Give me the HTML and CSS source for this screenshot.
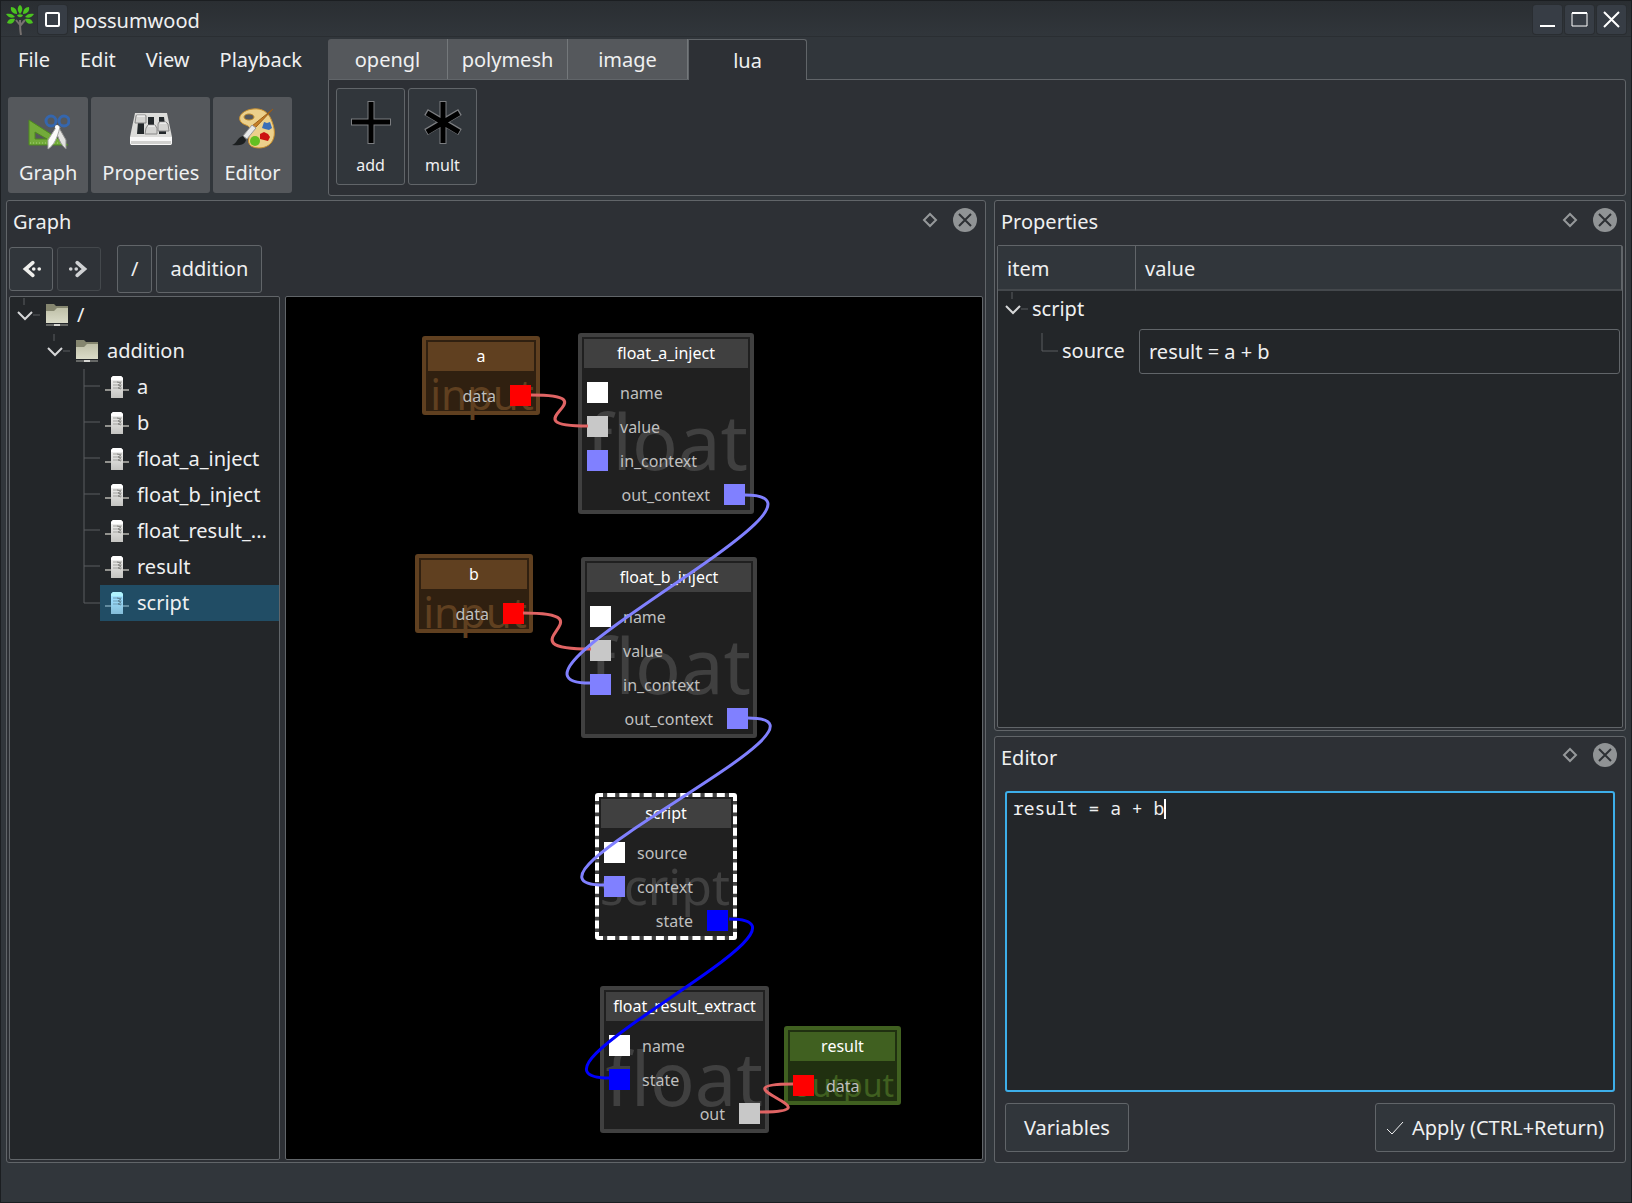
FILE: index.html
```html
<!DOCTYPE html>
<html lang="en">
<head>
<meta charset="utf-8">
<title>possumwood</title>
<link rel="stylesheet" href="styles.css">
</head>
<body>
<svg class="defs" aria-hidden="true">
  <defs>
    <linearGradient id="paper" x1="0" y1="0" x2="0" y2="1"><stop offset="0" stop-color="#bfc0a8"/><stop offset="1" stop-color="#dadbc8"/></linearGradient>
    <linearGradient id="metal" x1="0" y1="0" x2="0" y2="1"><stop offset="0" stop-color="#f6f6f5"/><stop offset="1" stop-color="#c4c4c1"/></linearGradient>
    <symbol id="i-folder" viewBox="0 0 24 24">
      <path d="M1 1h8l2 2h12v8H1z" fill="#85866f"/>
      <path d="M1 8h8l3-3h11v15H1z" fill="url(#paper)"/>
      <path d="M1 22h22" stroke="#a9a9a4" stroke-width="1"/>
      <path d="M9 22h6" stroke="#d6d6d2" stroke-width="2"/>
    </symbol>
    <symbol id="i-node" viewBox="0 0 24 24">
      <path d="M0 15h24" stroke="#92928e" stroke-width="2"/>
      <path d="M6 3l2-2h8l2 2v20H6z" fill="url(#metal)"/>
      <path d="M6 3l2-2h8l2 2v2H6z" fill="#fff"/>
      <path d="M8 7h9M8 10h9M8 13h9" stroke="#a3a3a0" stroke-width="1"/>
      <path d="M12 7l4 1-3 2 3 1-3 2 3 1" stroke="#878784" fill="none"/>
    </symbol>
    <symbol id="i-open" viewBox="0 0 30 36">
      <path d="M14 1v7M23 18h7" stroke="#5a5d60" stroke-width="1" fill="none"/>
      <path d="M8 15l7 7 7-7" stroke="#d6d7d8" stroke-width="2" fill="none"/>
    </symbol>
    <symbol id="i-tee" viewBox="0 0 30 36"><path d="M14 0v36M14 17h16" stroke="#5a5d60" stroke-width="1" fill="none"/></symbol>
    <symbol id="i-ell" viewBox="0 0 30 36"><path d="M14 0v18h16" stroke="#5a5d60" stroke-width="1" fill="none"/></symbol>
    <symbol id="i-float" viewBox="0 0 16 16"><path d="M8 2l6 6-6 6-6-6z" stroke="#95989a" stroke-width="2" fill="none"/></symbol>
    <symbol id="i-close" viewBox="0 0 24 24"><circle cx="12" cy="12" r="12" fill="#909395"/><path d="M6 6l12 12M18 6L6 18" stroke="#2d3034" stroke-width="2"/></symbol>
  </defs>
</svg>

<header class="titlebar">
  <svg class="logo" viewBox="0 0 28 30">
    <path d="M15 30c-1-5-1-8-1-15M14 20l-4-5M14 21l5-6" stroke="#77716f" stroke-width="2" fill="none"/>
    <g fill="#4bc320">
      <path d="M14 0c3 2 3 6 0 9-3-3-3-7 0-9z"/><path d="M5 2c4 0 6 3 6 7-4 0-7-3-6-7z"/><path d="M23 2c-4 0-6 3-6 7 4 0 7-3 6-7z"/>
      <path d="M0 9c4-1 7 0 9 3-4 2-7 0-9-3z"/><path d="M28 9c-4-1-7 0-9 3 4 2 7 0 9-3z"/>
      <path d="M1 18c1-4 4-5 8-4-1 4-4 6-8 4z"/><path d="M27 18c-1-4-4-5-8-4 1 4 4 6 8 4z"/><path d="M11 10c2-1 4-1 6 0-1 3-5 3-6 0z"/>
    </g>
  </svg>
  <button class="win-btn" aria-label="Window menu"><svg viewBox="0 0 29 29"><rect x="8" y="8" width="13" height="13" rx="1" fill="none" stroke="#fff" stroke-width="2"/></svg></button>
  <h1 class="win-title">possumwood</h1>
  <div class="win-controls">
    <button class="win-btn" aria-label="Minimize"><svg viewBox="0 0 29 29"><path d="M7 21h15" stroke="#fff" stroke-width="2"/></svg></button>
    <button class="win-btn" aria-label="Maximize"><svg viewBox="0 0 29 29"><path d="M7 8h15v13H7z" fill="none" stroke="#fff" stroke-width="1"/><path d="M7 8h15" stroke="#fff" stroke-width="2"/></svg></button>
    <button class="win-btn" aria-label="Close"><svg viewBox="0 0 29 29"><path d="M7 7l15 15M22 7L7 22" stroke="#fff" stroke-width="2"/></svg></button>
  </div>
</header>

<section class="top">
  <div class="top-left">
    <nav class="menu">
      <button>File</button><button>Edit</button><button>View</button><button>Playback</button>
    </nav>
    <div class="toolbar">
      <button class="tool">
        <svg viewBox="0 0 44 44">
          <path d="M3 12l39 25H3z" fill="#73ab3a" stroke="#4f8a1e"/><path d="M9 24l12 7H9z" fill="#56585c" stroke="#4f8a1e"/>
          <path d="M4 35h34" stroke="#a6d27a" stroke-dasharray="1 2"/>
          <path d="M29 19l3-1 8 14 0 9c-5-4-8-10-11-22z" fill="#e2e2e0" stroke="#8f8f8d" stroke-width="1"/>
          <path d="M34 19l-3-1-9 14 0 9c6-4 9-10 12-22z" fill="#fbfbfa" stroke="#a5a5a3" stroke-width="1"/>
          <ellipse cx="25" cy="13" rx="5" ry="5" fill="none" stroke="#3566ad" stroke-width="3"/><ellipse cx="38" cy="13" rx="5" ry="5" fill="none" stroke="#3566ad" stroke-width="3"/>
          <circle cx="31" cy="19" r="2" fill="#fff"/>
        </svg>Graph</button>
      <button class="tool">
        <svg viewBox="0 0 44 44">
          <path d="M6 5h32l5 24v5q0 3-2 3H3q-2 0-2-3v-5z" fill="#dcdcda"/><path d="M1 29h42v5q0 3-2 3H3q-2 0-2-3z" fill="#f8f8f8"/>
          <path d="M2 33h40v3H2z" fill="#d0d0ce"/>
          <path d="M9 14h6v12H8zM19 9h6v12h-6zM30 9h5l1 8h-6zM30 23h7v3h-7z" fill="#22272a"/>
          <path d="M7 8q0-1 1-1h8q1 0 1 1v7H6zM17 20l2-3h7l2 3v6H16zM29 16l1-2h7l2 2 1 7H29z" fill="#d4d4d2" stroke="#888" stroke-width="1"/>
          <path d="M8 8h8M19 18h7M31 15h6" stroke="#fff"/>
        </svg>Properties</button>
      <button class="tool">
        <svg viewBox="0 0 44 44">
          <path d="M22 1c9-1 15 3 18 10 4 9 5 18 0 24-5 6-15 6-20 3-5-4-1-10-1-16 0-5-4-4-8-7C5 10 11 2 22 1z" fill="#ecd08b" stroke="#c98f2c" stroke-width="1"/>
          <ellipse cx="18" cy="9" rx="5" ry="3" fill="#56585c" stroke="#b8862c" stroke-width="1"/>
          <path d="M33 14l3 1 3-1 1 3 1 3-3 2-4-1-3-1 1-3z" fill="#3b6fb8"/>
          <path d="M29 26l4-2 4 2 2 3-2 4-4-1-4-1z" fill="#cc1111"/>
          <circle cx="24" cy="33" r="5" fill="#63bf22"/>
          <path d="M42 1L24 20l-3-2z" fill="#c77f28" stroke="#9a5c16" stroke-width="1"/><path d="M25 20l-4-3-9 11 4 3z" fill="#e8e8e8" stroke="#999" stroke-width="1"/>
          <path d="M12 28l3 4c-1 5-8 6-14 5 5-1 5-8 11-9z" fill="#1c1f20"/>
        </svg>Editor</button>
    </div>
  </div>
  <div class="top-right">
    <div class="tabs" role="tablist">
      <button class="tab" role="tab">opengl</button><button class="tab" role="tab">polymesh</button><button class="tab" role="tab">image</button><button class="tab active" role="tab" aria-selected="true">lua</button>
    </div>
    <div class="shelf">
      <button class="op"><svg viewBox="0 0 48 48"><path d="M24 3v43M4 24h40" stroke="#7b7d80" stroke-width="7"/><path d="M24 4v41M5 24h38" stroke="#000" stroke-width="5"/></svg>add</button>
      <button class="op"><svg viewBox="0 0 48 48"><path d="M24 3v43M7 14l34 20M41 14L7 34" stroke="#7b7d80" stroke-width="7"/><path d="M24 4v41M8 15l32 19M40 15L8 34" stroke="#000" stroke-width="5"/></svg>mult</button>
    </div>
  </div>
</section>

<main class="docks">
  <section class="dock">
    <header class="dock-head"><h2>Graph</h2><button aria-label="Float"><svg class="ic-float"><use href="#i-float"/></svg></button><button aria-label="Close"><svg class="ic-close"><use href="#i-close"/></svg></button></header>
    <nav class="crumbs">
      <button class="arrow" aria-label="Back"><svg viewBox="0 0 24 24"><path d="M14 5l-8 7 8 7" stroke="#efefec" stroke-width="4" fill="none" stroke-linecap="round"/><circle cx="15" cy="12" r="2" fill="#efefec"/><circle cx="21" cy="12" r="2" fill="#efefec"/></svg></button>
      <button class="arrow off" aria-label="Forward"><svg viewBox="0 0 24 24"><path d="M10 5l8 7-8 7" stroke="#d0d2d4" stroke-width="4" fill="none" stroke-linecap="round"/><circle cx="9" cy="12" r="2" fill="#d0d2d4"/><circle cx="3" cy="12" r="2" fill="#d0d2d4"/></svg></button>
      <span class="gap"></span>
      <button class="crumb">/</button><button class="crumb">addition</button>
    </nav>
    <div class="graph-body">
      <ul class="tree">
        <li class="lvl0"><svg class="guide"><use href="#i-open"/></svg><span class="item"><svg><use href="#i-folder"/></svg>/</span></li>
        <li class="lvl1"><svg class="guide"><use href="#i-open"/></svg><span class="item"><svg><use href="#i-folder"/></svg>addition</span></li>
        <li class="lvl2"><svg class="guide"><use href="#i-tee"/></svg><span class="item"><svg><use href="#i-node"/></svg>a</span></li>
        <li class="lvl2"><svg class="guide"><use href="#i-tee"/></svg><span class="item"><svg><use href="#i-node"/></svg>b</span></li>
        <li class="lvl2"><svg class="guide"><use href="#i-tee"/></svg><span class="item"><svg><use href="#i-node"/></svg>float_a_inject</span></li>
        <li class="lvl2"><svg class="guide"><use href="#i-tee"/></svg><span class="item"><svg><use href="#i-node"/></svg>float_b_inject</span></li>
        <li class="lvl2"><svg class="guide"><use href="#i-tee"/></svg><span class="item"><svg><use href="#i-node"/></svg>float_result_...</span></li>
        <li class="lvl2"><svg class="guide"><use href="#i-tee"/></svg><span class="item"><svg><use href="#i-node"/></svg>result</span></li>
        <li class="lvl2"><svg class="guide"><use href="#i-ell"/></svg><span class="item selected"><svg><use href="#i-node"/></svg>script</span></li>
      </ul>
      <div class="canvas">
        <article class="node input n-a"><span class="ghost g-input">input</span><h3>a</h3><ul><li class="out"><i class="red"></i>data</li></ul></article>
        <article class="node n-float-a"><span class="ghost g-float">float</span><h3>float_a_inject</h3><ul><li><i class="white"></i>name</li><li><i class="grey"></i>value</li><li><i class="violet"></i>in_context</li><li class="out"><i class="violet"></i>out_context</li></ul></article>
        <article class="node input n-b"><span class="ghost g-input">input</span><h3>b</h3><ul><li class="out"><i class="red"></i>data</li></ul></article>
        <article class="node n-float-b"><span class="ghost g-float">float</span><h3>float_b_inject</h3><ul><li><i class="white"></i>name</li><li><i class="grey"></i>value</li><li><i class="violet"></i>in_context</li><li class="out"><i class="violet"></i>out_context</li></ul></article>
        <article class="node picked n-script"><span class="ghost g-script">script</span><h3>script</h3><ul><li><i class="white"></i>source</li><li><i class="violet"></i>context</li><li class="out"><i class="blue"></i>state</li></ul></article>
        <article class="node n-extract"><span class="ghost g-extract">float</span><h3>float_result_extract</h3><ul><li><i class="white"></i>name</li><li><i class="blue"></i>state</li><li class="out"><i class="grey"></i>out</li></ul></article>
        <article class="node output n-result"><span class="ghost g-output">output</span><h3>result</h3><ul><li><i class="red"></i>data</li></ul></article>
        <svg class="wires">
          <path class="w-red" d="M245 98c84 0-26 31 57 31"/>
          <path class="w-red" d="M237 316c92 0-26 36 68 36"/>
          <path class="w-violet" d="M459 198c120 0-275 188-155 188"/>
          <path class="w-violet" d="M462 421c115 0-259 167-144 167"/>
          <path class="w-blue" d="M443 622c115 0-234 159-119 159"/>
          <path class="w-red" d="M474 815c82 0-49-28 33-28"/>
        </svg>
      </div>
    </div>
  </section>

  <div class="side">
    <section class="dock props">
      <header class="dock-head"><h2>Properties</h2><button aria-label="Float"><svg class="ic-float"><use href="#i-float"/></svg></button><button aria-label="Close"><svg class="ic-close"><use href="#i-close"/></svg></button></header>
      <div class="sheet">
        <table>
          <thead><tr><th class="c-item">item</th><th>value</th></tr></thead>
          <tbody>
            <tr><td><span class="cell"><svg class="guide"><use href="#i-open"/></svg>script</span></td><td></td></tr>
            <tr><td><span class="cell sub"><svg class="guide"><use href="#i-ell"/></svg><label for="source">source</label></span></td><td class="c-edit"><input id="source" type="text" value="result = a + b"></td></tr>
          </tbody>
        </table>
      </div>
    </section>
    <section class="dock editor">
      <header class="dock-head"><h2>Editor</h2><button aria-label="Float"><svg class="ic-float"><use href="#i-float"/></svg></button><button aria-label="Close"><svg class="ic-close"><use href="#i-close"/></svg></button></header>
      <div class="editor-body">
        <div class="code"><textarea aria-label="Script source" spellcheck="false">result = a + b</textarea><span class="caret"></span></div>
        <div class="actions">
          <button class="push">Variables</button>
          <button class="push"><svg viewBox="0 0 18 18"><path d="M1 10l5 5L17 3" fill="none" stroke="#eff0f1" stroke-width="1"/></svg>Apply (CTRL+Return)</button>
        </div>
      </div>
    </section>
  </div>
</main>
</body>
</html>
```
FILE: styles.css
```css
:root {
  --win: #31363b;
  --panel: #2d3035;
  --base: #232629;
  --line: #616569;
  --text: #eff0f1;
}
* { box-sizing: border-box; }
body {
  margin: 0;
  height: 100vh;
  display: flex;
  flex-direction: column;
  background: var(--win);
  border: 1px solid #1b1e21;
  padding: 0 5px 39px 5px;
  color: var(--text);
  font: 20px/28px "Noto Sans", sans-serif;
  overflow: hidden;
}
button, input, textarea { font: inherit; color: inherit; }
button { background: none; border: 0; padding: 0; margin: 0; }
h1, h2, h3, ul { margin: 0; padding: 0; font: inherit; list-style: none; }
svg { display: block; flex: none; }
.defs { position: absolute; width: 0; height: 0; }

/* title bar */
.titlebar {
  display: flex;
  align-items: center;
  height: 36px;
  margin: 0 -5px 2px -5px;
  padding: 2px 5px 0 5px;
  border-bottom: 1px solid #2a2e32;
  background: linear-gradient(#2a2e32, #31363b);
}
.logo { width: 28px; height: 30px; margin-right: 4px; }
.win-btn {
  width: 29px;
  height: 29px;
  border-radius: 3px;
  background: #373d45;
  box-shadow: 0 0 0 1px #292d31;
}
.win-title { flex: 1; margin-left: 6px; padding-top: 2px; }
.win-controls { display: flex; gap: 3px; }

/* menu, toolbar and shelf */
.top { display: flex; height: 157px; margin-bottom: 4px; }
.top-left { width: 322px; }
.menu { display: flex; gap: 30px; padding: 7px 0 0 12px; height: 58px; }
.menu button { height: 28px; }
.toolbar { display: flex; gap: 3px; padding-left: 2px; }
.tool {
  display: flex;
  flex-direction: column;
  align-items: center;
  height: 96px;
  padding: 11px 11px 0;
  border-radius: 3px;
  background: #55585c;
}
.tool svg { width: 44px; height: 44px; margin-bottom: 7px; }
.top-right { flex: 1; display: flex; flex-direction: column; min-width: 0; }
.tabs { display: flex; height: 41px; }
.tab {
  width: 120px;
  height: 40px;
  padding-top: 2px;
  background: #55585c;
  border-right: 1px solid #74787b;
}
.tab:first-child { border-top-left-radius: 3px; }
.tab.active {
  width: 119px;
  height: 41px;
  position: relative;
  background: var(--panel);
  border: 1px solid var(--line);
  border-bottom: 0;
  border-top-right-radius: 3px;
}
.shelf {
  flex: 1;
  display: flex;
  gap: 3px;
  margin-top: -1px;
  padding: 8px 7px;
  background: var(--panel);
  border: 1px solid var(--line);
  border-radius: 0 3px 3px 3px;
}
.op {
  display: flex;
  flex-direction: column;
  align-items: center;
  width: 69px;
  height: 97px;
  padding-top: 9px;
  font-size: 16px;
  line-height: 24px;
  border: 1px solid var(--line);
  border-radius: 3px;
  background: var(--win);
}
.op svg { width: 48px; height: 48px; margin-bottom: 7px; }

/* docks */
.docks {
  flex: 1;
  min-height: 0;
  display: grid;
  grid-template-columns: 980fr 632fr;
  gap: 8px;
}
.dock {
  display: flex;
  flex-direction: column;
  min-width: 0;
  min-height: 0;
  padding: 0 2px 2px;
  background: var(--panel);
  border: 1px solid var(--line);
  border-radius: 3px;
}
.dock-head {
  display: flex;
  align-items: center;
  height: 44px;
  padding: 0 6px 7px 4px;
  gap: 15px;
}
.dock-head h2 { flex: 1; padding-top: 5px; }
.ic-float { width: 16px; height: 16px; }
.ic-close { width: 24px; height: 24px; }
.side { display: flex; flex-direction: column; gap: 5px; min-width: 0; min-height: 0; }
.props { flex: 531 1 0; }
.editor { flex: 427 1 0; }

/* graph dock */
.crumbs { display: flex; align-items: center; gap: 4px; height: 48px; margin-bottom: 3px; }
.crumbs button {
  border: 1px solid var(--line);
  border-radius: 3px;
  background: var(--win);
}
.crumbs .arrow { width: 44px; height: 44px; padding: 0 10px; }
.crumbs .arrow.off { border-color: #44484c; background: #2f3338; }
.crumbs .crumb { height: 48px; padding: 0 13px; }
.gap { width: 8px; }
.graph-body { flex: 1; min-height: 0; display: flex; gap: 5px; }
.tree {
  width: 271px;
  background: var(--base);
  border: 1px solid var(--line);
  border-radius: 2px;
  overflow: hidden;
}
.tree li { display: flex; height: 36px; }
.tree .lvl1 { padding-left: 30px; }
.tree .lvl2 { padding-left: 60px; }
.guide { width: 30px; height: 36px; }
.item { flex: 1; display: flex; align-items: center; gap: 8px; padding-left: 5px; white-space: nowrap; }
.item svg { width: 24px; height: 24px; }
.item.selected { background: #214d65; }
.item.selected svg { filter: brightness(75%) sepia(1) hue-rotate(155deg) saturate(130%); }

.canvas {
  flex: 1;
  position: relative;
  background: #000;
  border: 1px solid var(--line);
  border-radius: 2px;
  overflow: hidden;
}
.node {
  --frame: #404040;
  --fill: #202020;
  position: absolute;
  padding: 2px;
  border: 4px solid var(--frame);
  border-radius: 3px;
  background: var(--fill);
  font-size: 16px;
  line-height: 22px;
  color: #bfbfbf;
}
.node.input { --frame: #604020; --fill: #302010; width: 118px; }
.node.output { --frame: #406020; --fill: #203010; width: 117px; }
.node.picked {
  border: 4px dashed #fff;
  background: linear-gradient(#202020, #202020) padding-box, linear-gradient(#404040, #404040) border-box;
}
.node h3 {
  position: relative;
  height: 29px;
  line-height: 29px;
  text-align: center;
  color: #fff;
  background: var(--frame);
}
.node ul { position: relative; display: flex; flex-direction: column; gap: 13px; padding: 14px 3px 3px; }
.node li { display: flex; gap: 12px; height: 21px; }
.node li.out { flex-direction: row-reverse; gap: 14px; }
.node i { width: 21px; height: 21px; }
.red { background: #f00; }
.white { background: #fff; }
.grey { background: #c8c8c8; }
.violet { background: #8080ff; }
.blue { background: #00f; }
.ghost { position: absolute; right: 2px; bottom: 0; color: var(--frame); white-space: nowrap; }
.g-float { font-size: 76px; line-height: 100px; bottom: 19px; }
.g-extract { font-size: 74px; line-height: 100px; bottom: 1px; }
.g-script { font-size: 50px; line-height: 64px; right: 3px; bottom: 18px; }
.g-input { font-size: 42px; line-height: 54px; bottom: -10px; }
.g-output { font-size: 32px; line-height: 44px; right: 3px; bottom: -6px; }
.n-a { left: 136px; top: 39px; }
.n-float-a { left: 292px; top: 36px; width: 176px; }
.n-b { left: 129px; top: 257px; }
.n-float-b { left: 295px; top: 260px; width: 176px; }
.n-script { left: 309px; top: 496px; width: 142px; }
.n-extract { left: 314px; top: 689px; width: 169px; }
.n-result { left: 498px; top: 729px; }
.wires { position: absolute; inset: 0; width: 100%; height: 100%; fill: none; stroke-width: 3px; }
.w-red { stroke: #e06464; }
.w-violet { stroke: #8080ff; }
.w-blue { stroke: #00f; }

/* properties dock */
.sheet {
  flex: 1;
  background: var(--base);
  border: 1px solid var(--line);
  border-radius: 2px;
}
.sheet table { width: 100%; border-collapse: separate; border-spacing: 0; table-layout: fixed; }
.sheet th {
  height: 45px;
  padding: 2px 9px 0;
  text-align: left;
  font-weight: normal;
  background: var(--win);
  border-bottom: 2px solid #44484c;
  border-right: 1px solid var(--line);
}
.sheet .c-item { width: 138px; }
.sheet td { padding: 0; }
.cell { display: flex; align-items: center; gap: 4px; }
.cell.sub { padding-left: 30px; height: 48px; }
.sheet .c-edit { padding: 0 2px 0 3px; }
.sheet input {
  width: 100%;
  height: 45px;
  padding: 0 9px;
  background: var(--base);
  border: 1px solid var(--line);
  border-radius: 3px;
  outline: 0;
}

/* editor dock */
.editor-body { flex: 1; display: flex; flex-direction: column; padding: 10px 8px 8px; min-height: 0; }
.code {
  flex: 1;
  position: relative;
  display: flex;
  min-height: 0;
  font: 18px/22px "Noto Sans Mono", "DejaVu Sans Mono", monospace;
}
.code textarea {
  flex: 1;
  resize: none;
  margin: 0;
  padding: 4px 6px;
  background: var(--base);
  border: 2px solid #3daee9;
  border-radius: 3px;
  outline: 0;
}
.caret { position: absolute; left: calc(8px + 14ch); top: 8px; width: 2px; height: 20px; background: #fff; }
.actions { display: flex; justify-content: space-between; margin-top: 11px; }
.push {
  display: flex;
  align-items: center;
  gap: 8px;
  height: 49px;
  padding: 0 10px;
  border: 1px solid var(--line);
  border-radius: 3px;
  background: var(--win);
}
.push:first-child { padding: 0 18px; }
.push svg { width: 18px; height: 18px; }
```
